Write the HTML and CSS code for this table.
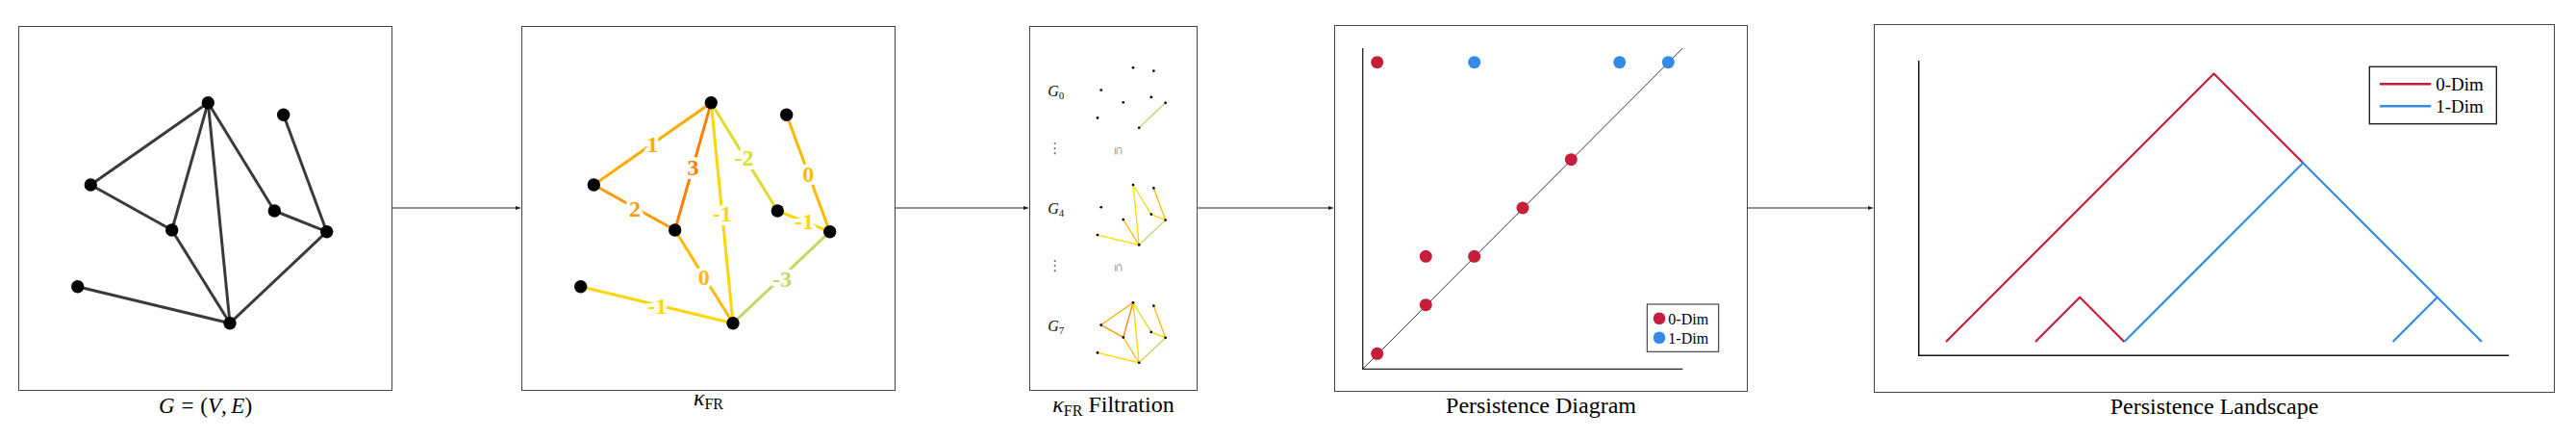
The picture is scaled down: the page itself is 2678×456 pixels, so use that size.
FILE: index.html
```html
<!DOCTYPE html>
<html>
<head>
<meta charset="utf-8">
<link rel="stylesheet" href="styles.css">
</head>
<body>
<div class="figure">

  <div class="panel panel--graph">
    <div class="frame">
      <svg width="387" height="377" viewBox="20 28 387 377">
        <g stroke="#3a3a3a" stroke-width="3">
          <line x1="216.3" y1="106.7" x2="94.3" y2="192"/>
          <line x1="216.3" y1="106.7" x2="178.7" y2="239"/>
          <line x1="216.3" y1="106.7" x2="239" y2="335.7"/>
          <line x1="216.3" y1="106.7" x2="285.3" y2="219"/>
          <line x1="294.7" y1="119.3" x2="339.7" y2="240.7"/>
          <line x1="94.3" y1="192" x2="178.7" y2="239"/>
          <line x1="285.3" y1="219" x2="339.7" y2="240.7"/>
          <line x1="178.7" y1="239" x2="239" y2="335.7"/>
          <line x1="80.7" y1="297.7" x2="239" y2="335.7"/>
          <line x1="339.7" y1="240.7" x2="239" y2="335.7"/>
        </g>
        <g fill="#000">
          <circle cx="216.3" cy="106.7" r="6.7"/>
          <circle cx="294.7" cy="119.3" r="6.7"/>
          <circle cx="94.3" cy="192" r="6.7"/>
          <circle cx="285.3" cy="219" r="6.7"/>
          <circle cx="339.7" cy="240.7" r="6.7"/>
          <circle cx="178.7" cy="239" r="6.7"/>
          <circle cx="80.7" cy="297.7" r="6.7"/>
          <circle cx="239" cy="335.7" r="6.7"/>
        </g>
      </svg>
    </div>
    <div class="caption caption--math"><span class="mi">G</span><span class="mo">=</span>(<span class="mi">V</span>,<span class="sp"></span><span class="mi">E</span>)</div>
  </div>

  <div class="arrow"><svg width="134" height="10" viewBox="0 0 134 10"><line x1="0" y1="5" x2="130" y2="5" stroke="#222" stroke-width="1"/><polygon points="128,3 134,5 128,7" fill="#222"/></svg></div>

  <div class="panel panel--graph">
    <div class="frame">
      <svg width="387" height="377" viewBox="543 28 387 377">
        <g transform="translate(523 0)">
          <g stroke-width="3">
            <line x1="216.3" y1="106.7" x2="94.3" y2="192" stroke="#ffab00"/>
            <line x1="216.3" y1="106.7" x2="178.7" y2="239" stroke="#ff7f00"/>
            <line x1="216.3" y1="106.7" x2="239" y2="335.7" stroke="#ffd700"/>
            <line x1="216.3" y1="106.7" x2="285.3" y2="219" stroke="#dedc2a"/>
            <line x1="294.7" y1="119.3" x2="339.7" y2="240.7" stroke="#ffba00"/>
            <line x1="94.3" y1="192" x2="178.7" y2="239" stroke="#ff9a00"/>
            <line x1="285.3" y1="219" x2="339.7" y2="240.7" stroke="#ffd700"/>
            <line x1="178.7" y1="239" x2="239" y2="335.7" stroke="#ffba00"/>
            <line x1="80.7" y1="297.7" x2="239" y2="335.7" stroke="#ffd700"/>
            <line x1="339.7" y1="240.7" x2="239" y2="335.7" stroke="#c2d764"/>
          </g>
          <g class="elabel" text-anchor="middle">
            <text x="155.3" y="158.3" fill="#ffab00">1</text>
            <text x="137" y="225" fill="#ff9a00">2</text>
            <text x="197.5" y="181.5" fill="#ff7f00">3</text>
            <text x="227.7" y="229.8" fill="#ffd700">-1</text>
            <text x="250.5" y="172" fill="#dedc2a">-2</text>
            <text x="317.2" y="189" fill="#ffba00">0</text>
            <text x="313" y="238.3" fill="#ffd700">-1</text>
            <text x="208.8" y="295.8" fill="#ffba00">0</text>
            <text x="160.2" y="326.3" fill="#ffd700">-1</text>
            <text x="290" y="297.5" fill="#c2d764">-3</text>
          </g>
          <g fill="#000">
            <circle cx="216.3" cy="106.7" r="6.7"/>
            <circle cx="294.7" cy="119.3" r="6.7"/>
            <circle cx="94.3" cy="192" r="6.7"/>
            <circle cx="285.3" cy="219" r="6.7"/>
            <circle cx="339.7" cy="240.7" r="6.7"/>
            <circle cx="178.7" cy="239" r="6.7"/>
            <circle cx="80.7" cy="297.7" r="6.7"/>
            <circle cx="239" cy="335.7" r="6.7"/>
          </g>
        </g>
      </svg>
    </div>
    <div class="caption caption--kappa"><span class="kappa">κ</span><sub class="sub">FR</sub></div>
  </div>

  <div class="arrow"><svg width="139" height="10" viewBox="0 0 139 10"><line x1="0" y1="5" x2="135" y2="5" stroke="#222" stroke-width="1"/><polygon points="133,3 139,5 133,7" fill="#222"/></svg></div>

  <div class="panel panel--filt">
    <div class="frame">
      <svg width="173" height="377" viewBox="1071 28 173 377">
        <g class="glabel">
          <text x="1089.3" y="100">G<tspan class="gsub" dy="3">0</tspan></text>
          <text x="1089.3" y="221.7">G<tspan class="gsub" dy="3">4</tspan></text>
          <text x="1089.3" y="344">G<tspan class="gsub" dy="3">7</tspan></text>
        </g>
        <g class="vdots" text-anchor="middle">
          <text x="1096.7" y="159">⋮</text>
          <text x="1096.7" y="281">⋮</text>
        </g>
        <g class="subset" text-anchor="middle">
          <text x="1162.7" y="156.7" transform="rotate(90 1162.7 156.7)" dominant-baseline="central">⊆</text>
          <text x="1162.7" y="278.3" transform="rotate(90 1162.7 278.3)" dominant-baseline="central">⊆</text>
        </g>
        <!-- G0 -->
        <g transform="translate(1119 41.2) scale(0.2727)">
          <line x1="339.7" y1="240.7" x2="239" y2="335.7" stroke="#c2d764" stroke-width="4.8"/>
          <g fill="#000">
            <circle cx="216.3" cy="106.7" r="5"/><circle cx="294.7" cy="119.3" r="5"/><circle cx="94.3" cy="192" r="5"/><circle cx="285.3" cy="219" r="5"/><circle cx="339.7" cy="240.7" r="5"/><circle cx="178.7" cy="239" r="5"/><circle cx="80.7" cy="297.7" r="5"/><circle cx="239" cy="335.7" r="5"/>
          </g>
        </g>
        <!-- G4 -->
        <g transform="translate(1119 162.9) scale(0.2727)">
          <g stroke-width="4.8">
            <line x1="216.3" y1="106.7" x2="239" y2="335.7" stroke="#ffd700"/>
            <line x1="216.3" y1="106.7" x2="285.3" y2="219" stroke="#dedc2a"/>
            <line x1="294.7" y1="119.3" x2="339.7" y2="240.7" stroke="#ffba00"/>
            <line x1="285.3" y1="219" x2="339.7" y2="240.7" stroke="#ffd700"/>
            <line x1="178.7" y1="239" x2="239" y2="335.7" stroke="#ffba00"/>
            <line x1="80.7" y1="297.7" x2="239" y2="335.7" stroke="#ffd700"/>
            <line x1="339.7" y1="240.7" x2="239" y2="335.7" stroke="#c2d764"/>
          </g>
          <g fill="#000">
            <circle cx="216.3" cy="106.7" r="5"/><circle cx="294.7" cy="119.3" r="5"/><circle cx="94.3" cy="192" r="5"/><circle cx="285.3" cy="219" r="5"/><circle cx="339.7" cy="240.7" r="5"/><circle cx="178.7" cy="239" r="5"/><circle cx="80.7" cy="297.7" r="5"/><circle cx="239" cy="335.7" r="5"/>
          </g>
        </g>
        <!-- G7 -->
        <g transform="translate(1119 285.2) scale(0.2727)">
          <g stroke-width="4.8">
            <line x1="216.3" y1="106.7" x2="94.3" y2="192" stroke="#ffab00"/>
            <line x1="216.3" y1="106.7" x2="178.7" y2="239" stroke="#ff7f00"/>
            <line x1="216.3" y1="106.7" x2="239" y2="335.7" stroke="#ffd700"/>
            <line x1="216.3" y1="106.7" x2="285.3" y2="219" stroke="#dedc2a"/>
            <line x1="294.7" y1="119.3" x2="339.7" y2="240.7" stroke="#ffba00"/>
            <line x1="94.3" y1="192" x2="178.7" y2="239" stroke="#ff9a00"/>
            <line x1="285.3" y1="219" x2="339.7" y2="240.7" stroke="#ffd700"/>
            <line x1="178.7" y1="239" x2="239" y2="335.7" stroke="#ffba00"/>
            <line x1="80.7" y1="297.7" x2="239" y2="335.7" stroke="#ffd700"/>
            <line x1="339.7" y1="240.7" x2="239" y2="335.7" stroke="#c2d764"/>
          </g>
          <g fill="#000">
            <circle cx="216.3" cy="106.7" r="5"/><circle cx="294.7" cy="119.3" r="5"/><circle cx="94.3" cy="192" r="5"/><circle cx="285.3" cy="219" r="5"/><circle cx="339.7" cy="240.7" r="5"/><circle cx="178.7" cy="239" r="5"/><circle cx="80.7" cy="297.7" r="5"/><circle cx="239" cy="335.7" r="5"/>
          </g>
        </g>
      </svg>
    </div>
    <div class="caption"><span class="kappa">κ</span><sub class="sub">FR</sub> Filtration</div>
  </div>

  <div class="arrow"><svg width="142" height="10" viewBox="0 0 142 10"><line x1="0" y1="5" x2="138" y2="5" stroke="#222" stroke-width="1"/><polygon points="136,3 142,5 136,7" fill="#222"/></svg></div>

  <div class="panel panel--pd">
    <div class="frame">
      <svg width="428" height="379" viewBox="1388 27 428 379">
        <line x1="1416.7" y1="50" x2="1416.7" y2="383.3" stroke="#222" stroke-width="1.3"/>
        <line x1="1416.1" y1="383.3" x2="1749.3" y2="383.3" stroke="#222" stroke-width="1.3"/>
        <line x1="1416.7" y1="383.3" x2="1749.3" y2="50" stroke="#333" stroke-width="1"/>
        <g fill="#c51e3a">
          <circle cx="1431.7" cy="64.7" r="6.5"/>
          <circle cx="1633.3" cy="165.7" r="6.5"/>
          <circle cx="1583" cy="216" r="6.5"/>
          <circle cx="1482.3" cy="266.3" r="6.5"/>
          <circle cx="1532.7" cy="266.3" r="6.5"/>
          <circle cx="1482.3" cy="316.7" r="6.5"/>
          <circle cx="1431.7" cy="367.3" r="6.5"/>
        </g>
        <g fill="#338be6">
          <circle cx="1532.7" cy="64.7" r="6.5"/>
          <circle cx="1683.7" cy="64.7" r="6.5"/>
          <circle cx="1734.3" cy="64.7" r="6.5"/>
        </g>
        <rect x="1712.3" y="316" width="74.4" height="49.3" fill="#fff" stroke="#222" stroke-width="1"/>
        <circle cx="1725" cy="330.7" r="6.3" fill="#c51e3a"/>
        <circle cx="1725" cy="350.7" r="6.3" fill="#338be6"/>
        <g class="legend legend--pd">
          <text x="1734.3" y="336.5">0-Dim</text>
          <text x="1734.3" y="356.5">1-Dim</text>
        </g>
      </svg>
    </div>
    <div class="caption">Persistence Diagram</div>
  </div>

  <div class="arrow"><svg width="131" height="10" viewBox="0 0 131 10"><line x1="0" y1="5" x2="127" y2="5" stroke="#222" stroke-width="1"/><polygon points="125,3 131,5 125,7" fill="#222"/></svg></div>

  <div class="panel panel--pl">
    <div class="frame">
      <svg width="706" height="381" viewBox="1949 26 706 381">
        <line x1="1994.7" y1="63" x2="1994.7" y2="369.3" stroke="#111" stroke-width="1.5"/>
        <line x1="1994" y1="369.3" x2="2608.3" y2="369.3" stroke="#111" stroke-width="1.5"/>
        <g fill="none" stroke-width="2.2">
          <polyline points="2023,355 2301.5,76.5 2394.2,169.2" stroke="#c51e3a"/>
          <polyline points="2116,355 2162.2,308.8 2208.4,355" stroke="#c51e3a"/>
          <polyline points="2208.4,355 2394.2,169.2 2580,355" stroke="#338be6"/>
          <polyline points="2487.7,355 2533.8,308.8" stroke="#338be6"/>
        </g>
        <rect x="2463.3" y="69.3" width="132" height="59.4" fill="#fff" stroke="#111" stroke-width="1.3"/>
        <line x1="2474" y1="87.3" x2="2527.3" y2="87.3" stroke="#c51e3a" stroke-width="2.4"/>
        <line x1="2474" y1="110.3" x2="2527.3" y2="110.3" stroke="#338be6" stroke-width="2.4"/>
        <g class="legend legend--pl">
          <text x="2532.3" y="93.5">0-Dim</text>
          <text x="2532.3" y="116.5">1-Dim</text>
        </g>
      </svg>
    </div>
    <div class="caption">Persistence Landscape</div>
  </div>

</div>
</body>
</html>
```

FILE: styles.css
```css
html, body {
  margin: 0;
  padding: 0;
  background: #fff;
}

body {
  width: 2678px;
  height: 456px;
  overflow: hidden;
  font-family: "Liberation Serif", "Times New Roman", serif;
  color: #000;
}

.figure {
  display: flex;
  align-items: flex-start;
  padding: 25px 0 0 19px;
  box-sizing: border-box;
  width: 2678px;
  height: 456px;
}

.panel {
  display: flex;
  flex-direction: column;
  align-items: center;
  flex: none;
}

.frame {
  border: 1px solid #454545;
  box-sizing: border-box;
  background: #fff;
}

.frame svg {
  display: block;
}

.panel--graph .frame {
  width: 389px;
  height: 379px;
  margin-top: 2px;
}

.panel--filt .frame {
  width: 175px;
  height: 379px;
  margin-top: 2px;
}

.panel--pd .frame {
  width: 430px;
  height: 381px;
  margin-top: 1px;
}

.panel--pl .frame {
  width: 708px;
  height: 383px;
}

.arrow {
  flex: none;
  margin-top: 186px;
  height: 10px;
}

.arrow svg {
  display: block;
}

.caption {
  font-size: 24px;
  line-height: 28px;
  white-space: nowrap;
}

.caption--math {
  font-size: 23px;
  margin-top: 2px;
}

.caption--kappa {
  margin-top: -7px;
}

.mi {
  font-style: italic;
}

.mo {
  padding: 0 0.3em;
}

.sp {
  display: inline-block;
  width: 0.2em;
}

.kappa {
  font-style: italic;
}

.sub {
  font-size: 16px;
  line-height: 0;
  vertical-align: -4px;
}

.elabel text {
  font-family: "Liberation Serif", serif;
  font-weight: bold;
  font-size: 24px;
  stroke: #fff;
  stroke-width: 8px;
  stroke-linejoin: round;
  paint-order: stroke;
}

.glabel text {
  font-family: "Liberation Serif", serif;
  font-style: italic;
  font-size: 16px;
  fill: #111;
}

.glabel .gsub {
  font-style: normal;
  font-size: 11px;
}

.vdots text {
  font-family: "DejaVu Sans", sans-serif;
  font-size: 15px;
  fill: #666;
}

.subset text {
  font-family: "DejaVu Sans", sans-serif;
  font-size: 12px;
  fill: #999;
}

.legend text {
  font-family: "Liberation Serif", serif;
  fill: #000;
}

.legend--pd text {
  font-size: 16px;
}

.legend--pl text {
  font-size: 19px;
}
```
